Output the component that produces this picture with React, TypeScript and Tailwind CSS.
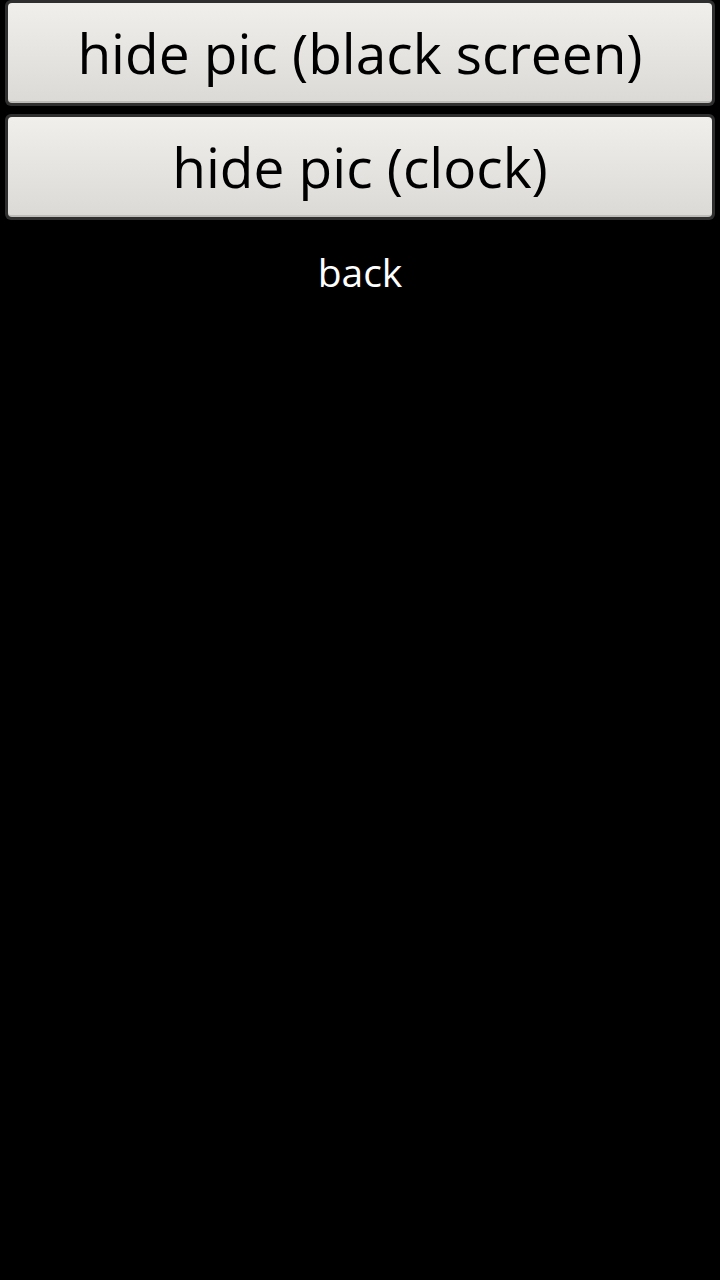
export default function App() {
  const buttons = ['hide pic (black screen)', 'hide pic (clock)'];
  return (
    <div className="min-h-[1280px] w-[720px] bg-black font-['Open_Sans',sans-serif]">
      <div className="flex flex-col gap-[8px] px-[5px]">
        {buttons.map((label) => (
          <div key={label} className="rounded-[6px] bg-[#2f2f2f] p-[3px]">
            <div className="flex h-[100px] items-center justify-center rounded-[4px] border-b-2 border-[#bebcb9] bg-gradient-to-b from-[#f1efec] to-[#dcdad7] text-[55px] leading-none text-black">
              {label}
            </div>
          </div>
        ))}
      </div>
      <div className="mt-[32px] text-center text-[39px] leading-none text-white">back</div>
    </div>
  );
}
